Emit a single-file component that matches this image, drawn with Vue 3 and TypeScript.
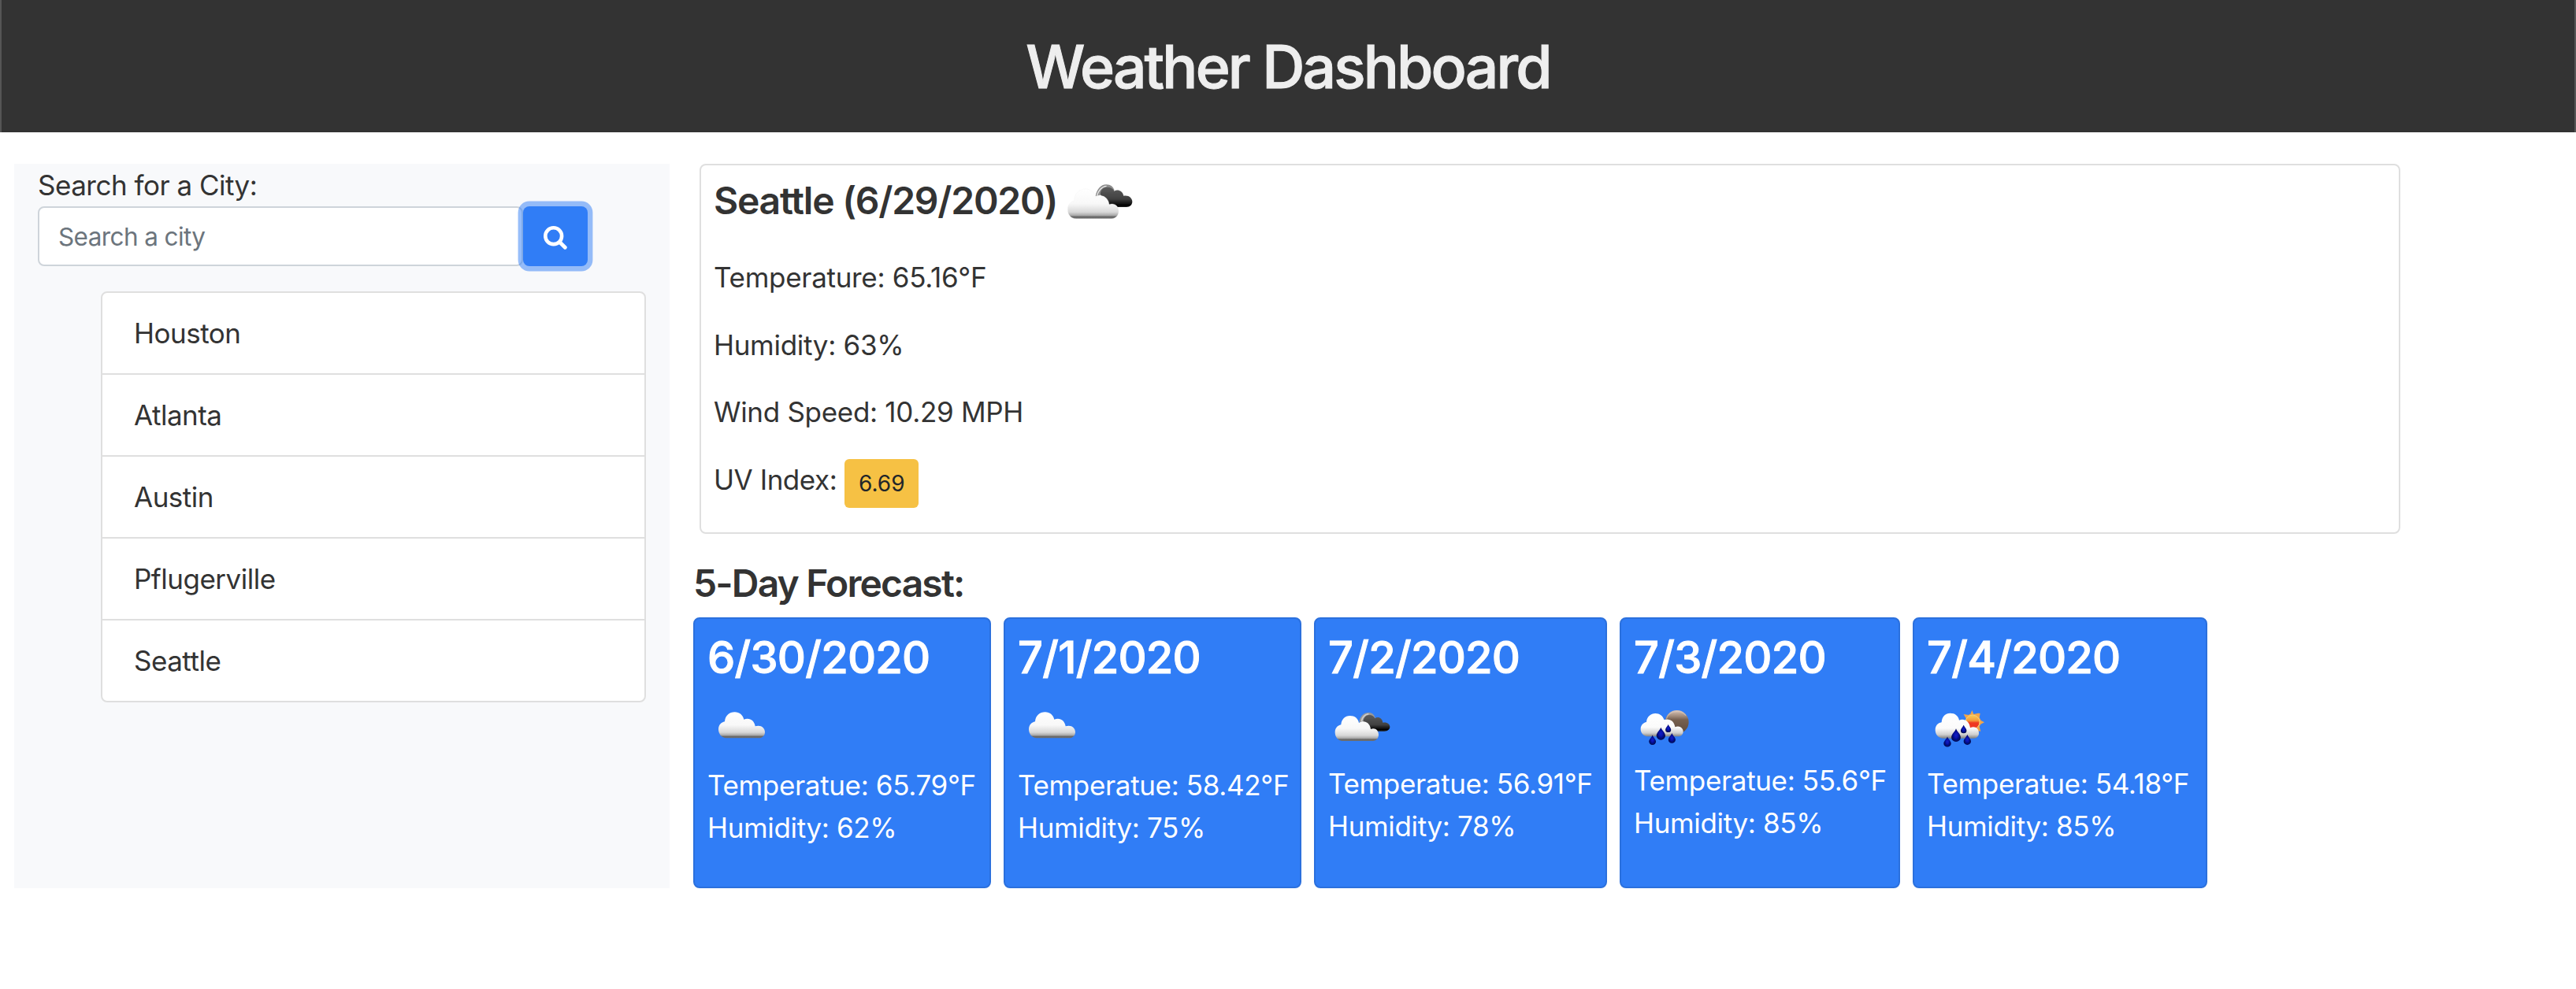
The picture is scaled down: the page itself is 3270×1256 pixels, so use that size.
<script setup lang="ts">
interface Forecast {
  date: string
  temp: string
  humidity: string
  icon: 'cloud' | 'broken' | 'rain-night' | 'rain-day'
  viewBox: string
  width: number
  iconSize: number
}

const cities: string[] = ['Houston', 'Atlanta', 'Austin', 'Pflugerville', 'Seattle']

const forecasts: Forecast[] = [
  { date: '6/30/2020', temp: '65.79', humidity: '62', icon: 'cloud', viewBox: '24 45 255 255', width: 378, iconSize: 85 },
  { date: '7/1/2020', temp: '58.42', humidity: '75', icon: 'cloud', viewBox: '24 45 255 255', width: 378, iconSize: 85 },
  { date: '7/2/2020', temp: '56.91', humidity: '78', icon: 'broken', viewBox: '78 45 249 249', width: 372, iconSize: 83 },
  { date: '7/3/2020', temp: '55.6', humidity: '85', icon: 'rain-night', viewBox: '72 45 237 237', width: 356, iconSize: 79 },
  { date: '7/4/2020', temp: '54.18', humidity: '85', icon: 'rain-day', viewBox: '48 45 249 249', width: 374, iconSize: 83 },
]
</script>

<template>
  <div class="page">
    <svg class="defs" width="0" height="0" aria-hidden="true">
      <defs>
        <linearGradient id="white-cloud" x1="0" y1="0" x2="0" y2="1">
          <stop offset="0" stop-color="#fff" />
          <stop offset="0.5" stop-color="#f8f8f8" />
          <stop offset="0.78" stop-color="#d8d8d8" />
          <stop offset="0.9" stop-color="#a5a5a5" />
          <stop offset="0.93" stop-color="#686868" />
          <stop offset="1" stop-color="#6f6f6f" />
        </linearGradient>
        <linearGradient id="rain-cloud" x1="0" y1="0" x2="0" y2="1">
          <stop offset="0" stop-color="#fff" />
          <stop offset="0.6" stop-color="#fbfbfb" />
          <stop offset="0.85" stop-color="#cfcfcf" />
          <stop offset="1" stop-color="#808080" />
        </linearGradient>
        <linearGradient id="dark-cloud" x1="0" y1="0" x2="0" y2="1">
          <stop offset="0" stop-color="#5c5c5c" />
          <stop offset="0.6" stop-color="#404040" />
          <stop offset="0.9" stop-color="#050505" />
          <stop offset="1" stop-color="#222" />
        </linearGradient>
        <linearGradient id="moon" x1="0" y1="0" x2="0" y2="1">
          <stop offset="0" stop-color="#d8c4b8" />
          <stop offset="0.25" stop-color="#a08a7a" />
          <stop offset="0.4" stop-color="#76604f" />
          <stop offset="1" stop-color="#5e4a3b" />
        </linearGradient>
        <linearGradient id="sun" x1="0" y1="0" x2="0" y2="1">
          <stop offset="0" stop-color="#f9cf58" />
          <stop offset="0.4" stop-color="#f59a3a" />
          <stop offset="0.55" stop-color="#ee3a24" />
          <stop offset="1" stop-color="#f03524" />
        </linearGradient>
        <radialGradient id="drop-fill">
          <stop offset="0" stop-color="#0a1ed0" />
          <stop offset="0.55" stop-color="#06109a" />
          <stop offset="1" stop-color="#03074f" />
        </radialGradient>
        <filter id="soft" x="-10%" y="-10%" width="120%" height="120%">
          <feGaussianBlur stdDeviation="1.3" />
        </filter>
        <path id="drop" d="M0 -24C4 -12 17 -4 17 8A17 16 0 0 1 -17 8C-17 -4 -4 -12 0 -24Z" fill="url(#drop-fill)" />
      </defs>
    </svg>

    <header class="header"><h1>Weather Dashboard</h1></header>

    <main class="main">
      <aside class="sidebar">
        <label class="label" for="city">Search for a City:</label>
        <div class="search">
          <input id="city" class="input" type="text" placeholder="Search a city" />
          <button class="btn" type="button" aria-label="Search">
            <svg class="glass" width="30" height="30" viewBox="0 0 30 30" fill="none" stroke="#fff">
              <circle cx="12.700" cy="12.700" r="10.400" stroke-width="4.600" />
              <path d="M20.500 20.500L27.300 27.300" stroke-width="4.800" stroke-linecap="round" />
            </svg>
          </button>
        </div>
        <ul class="cities">
          <li v-for="city in cities" :key="city">{{ city }}</li>
        </ul>
      </aside>

      <section class="content">
        <article class="today">
          <h3 class="today-title">
            <span class="today-name">Seattle (6/29/2020)</span>
            <svg class="today-icon" width="100" height="70" viewBox="90 30 300 210">
              <g filter="url(#soft)">
                <path d="M212 118C216 92 232 73 253 73C270 73 280 82 284 96L262 112L235 112Z" fill="#8d8d8d" />
                <path d="M217 118C222 96 236 80 254 79" fill="none" stroke="#e8e8e8" stroke-width="4" />
                <path d="M231 112C229 92 243 83 256 83C269 83 279 88 283 98C296 90 315 97 319 116C338 112 352 124 352 138C352 150 343 159 330 159H270Z" fill="url(#dark-cloud)" />
                <path d="M138 203C118 203 106 188 106 168C106 149 117 138 131 135C131 106 151 90 174 90C194 90 208 102 212 121C233 108 260 119 264 149C284 142 300 155 300 175C300 192 288 203 273 203Z" fill="url(#white-cloud)" stroke="#efefef" stroke-width="1" />
              </g>
            </svg>
          </h3>
          <p>Temperature: 65.16°F</p>
          <p>Humidity: 63%</p>
          <p>Wind Speed: 10.29 MPH</p>
          <p class="uv">UV Index: <span class="badge">6.69</span></p>
        </article>

        <h3 class="forecast-title">5-Day Forecast:</h3>
        <div class="forecast">
          <article v-for="day in forecasts" :key="day.date" class="day" :style="{ width: day.width + 'px' }">
            <h3 class="date">{{ day.date }}</h3>
            <svg class="icon" :width="day.iconSize" :height="day.iconSize" :viewBox="day.viewBox">
              <g v-if="day.icon === 'cloud'" filter="url(#soft)">
                <path d="M93 202C78 200 66 186 66 169C66 152 77 142 90 139C91 117 108 103 128 103C146 103 159 114 163 131C183 122 203 134 206 157C226 150 243 162 243 179C243 191 234 202 220 202Z" fill="url(#white-cloud)" />
              </g>
              <g v-else-if="day.icon === 'broken'" filter="url(#soft)">
                <path d="M196 140C199 119 214 105 232 105C245 105 253 112 257 125L232 146Z" fill="#999" />
                <path d="M205 138C207 123 218 111 232 110" fill="none" stroke="#ccc" stroke-width="5" />
                <path d="M212 142C211 126 221 114 234 114C246 114 252 119 256 127C268 118 284 126 286 143C301 140 313 148 313 159C313 169 304 176 292 176H240Z" fill="url(#dark-cloud)" />
                <path d="M130 213C115 211 104 197 104 180C104 164 114 154 127 151C129 130 142 117 161 117C179 117 192 127 195 144C214 132 237 142 240 168C257 161 270 173 270 189C270 202 261 213 249 213Z" fill="url(#white-cloud)" />
              </g>
              <g v-else-if="day.icon === 'rain-night'" filter="url(#soft)">
                <circle cx="236" cy="141" r="45" fill="url(#moon)" />
                <path d="M196 128C202 110 217 101 236 101C250 101 263 106 270 116" fill="none" stroke="#dccbc0" stroke-width="4" opacity="0.6" />
                <path d="M122 196C108 193 98 182 98 168C98 152 109 143 120 141C121 121 137 108 154 108C170 108 183 117 187 132C208 126 226 137 229 160C245 152 260 163 260 177C260 188 252 196 242 196Z" fill="url(#rain-cloud)" />
                <use href="#drop" transform="translate(175 185)" />
                <use href="#drop" transform="translate(203 165) scale(.63)" />
                <use href="#drop" transform="translate(143 209) scale(.78)" />
                <use href="#drop" transform="translate(217 202) scale(.8)" />
              </g>
              <g v-else filter="url(#soft)">
                <path d="M220 96L226 111L243 107L251 108L248 124L254 135L267 142L253 149L248 158L253 176L236 174L200 150L198 129L188 111L206 114L214 110Z" fill="#f2a44a" />
                <circle cx="222" cy="141" r="27" fill="url(#sun)" stroke="#f5d27a" stroke-width="3" />
                <path d="M108 203C91 201 80 188 80 171C80 155 90 144 104 142C105 120 119 107 137 107C155 107 168 117 171 134C190 126 210 138 213 163C231 154 246 166 246 183C246 195 238 203 227 203Z" fill="url(#rain-cloud)" />
                <use href="#drop" transform="translate(159 191) scale(1.04)" />
                <use href="#drop" transform="translate(188 168) scale(.66)" />
                <use href="#drop" transform="translate(126 216) scale(.82)" />
                <use href="#drop" transform="translate(202 208) scale(.82)" />
              </g>
            </svg>
            <div class="line">Temperatue: {{ day.temp }}°F</div>
            <div class="line">Humidity: {{ day.humidity }}%</div>
          </article>
        </div>
      </section>
    </main>
  </div>
</template>

<style>
body {
  margin: 0;
  background: #fff;
}
</style>

<style scoped>
* {
  box-sizing: border-box;
}
.page {
  width: 3270px;
  height: 1256px;
  overflow: hidden;
  font-family: Inter, "Liberation Sans", sans-serif;
  font-size: 35px;
  line-height: 54px;
  letter-spacing: -0.5px;
  color: #333;
  background: #fff;
}
.defs {
  position: absolute;
}
h1,
h3,
p,
ul {
  margin: 0;
  padding: 0;
  font-weight: 600;
  white-space: nowrap;
}
.header {
  height: 168px;
  display: flex;
  align-items: center;
  justify-content: center;
  background: #333;
  border: solid #555;
  border-width: 0 2px;
}
.header h1 {
  padding-top: 2px;
  font-size: 75px;
  font-weight: 500;
  line-height: 90px;
  letter-spacing: -2.850px;
  color: #eee;
  -webkit-text-stroke: 1px #eee;
}
.main {
  display: flex;
  align-items: flex-start;
  gap: 30px;
  padding: 40px 0 0 18px;
}
.sidebar {
  width: 832px;
  height: 920px;
  padding: 0 30px;
  background: #f8f9fb;
}
.label {
  display: block;
}
.search {
  display: flex;
  height: 76px;
}
.input {
  width: 616px;
  height: 76px;
  padding: 0 24px;
  border: 2px solid #ced4da;
  border-radius: 8px;
  background: #fff;
  font: inherit;
  font-size: 31.500px;
  letter-spacing: -0.600px;
}
.input::placeholder {
  color: #6c757d;
  opacity: 1;
}
.btn {
  width: 82px;
  height: 76px;
  padding: 4px 0 0;
  display: flex;
  align-items: center;
  justify-content: center;
  border: 0;
  border-radius: 8px;
  background: #307df6;
  box-shadow: 0 0 0 6.400px rgba(48, 125, 246, 0.5);
}
.cities {
  margin: 32px 0 0 80px;
  width: 692px;
  list-style: none;
  border: 2px solid #dfdfdf;
  border-radius: 8px;
  background: #fff;
  font-weight: 400;
}
.cities li {
  height: 104px;
  padding: 24px 40px;
  border-bottom: 2px solid #dfdfdf;
}
.cities li:last-child {
  height: 102px;
  border-bottom: 0;
}
.today {
  width: 2159px;
  height: 470px;
  margin-left: 8px;
  padding: 16px;
  border: 2px solid #dfdfdf;
  border-radius: 8px;
}
.today-title {
  display: flex;
  height: 57px;
  margin-bottom: 42px;
  font-size: 48px;
  line-height: 57px;
  letter-spacing: -1.250px;
}
.today-name {
  width: 444px;
}
.today-icon {
  margin-top: -6px;
}
.today p {
  height: 54px;
  margin-bottom: 31.700px;
  font-weight: 400;
  letter-spacing: -0.300px;
}
.today .uv {
  display: flex;
  gap: 10px;
  height: 62px;
  margin: 0;
  letter-spacing: -0.450px;
}
.badge {
  width: 94px;
  height: 62px;
  margin-top: 1px;
  border-radius: 6px;
  background: #f6c144;
  color: #212529;
  font-size: 28px;
  line-height: 63px;
  letter-spacing: 0;
  text-align: center;
}
.forecast-title {
  margin: 34px 0 14px;
  height: 58px;
  font-size: 48px;
  line-height: 58px;
  letter-spacing: -1.850px;
}
.forecast {
  display: flex;
  gap: 16px;
}
.day {
  height: 344px;
  padding: 16px;
  border: 2px solid #2b70dd;
  border-radius: 8px;
  background: #307df6;
  color: #fff;
  white-space: nowrap;
}
.date {
  font-size: 56px;
  font-weight: 500;
  line-height: 67px;
  margin-bottom: 16px;
  letter-spacing: -0.750px;
  -webkit-text-stroke: 1px #fff;
}
.icon {
  display: block;
}
.line {
  letter-spacing: -0.350px;
}
</style>
